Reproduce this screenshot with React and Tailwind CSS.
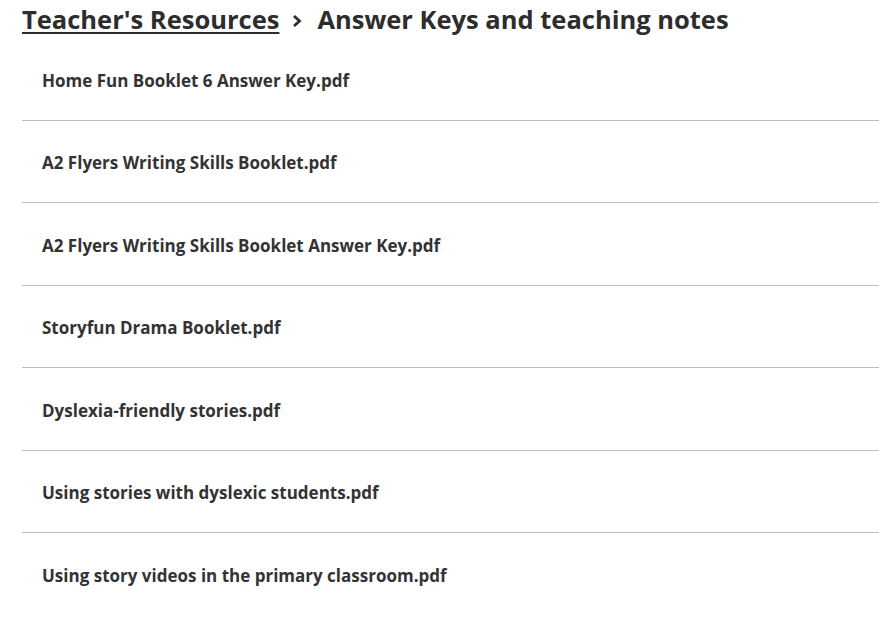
const files = [
  "Home Fun Booklet 6 Answer Key.pdf",
  "A2 Flyers Writing Skills Booklet.pdf",
  "A2 Flyers Writing Skills Booklet Answer Key.pdf",
  "Storyfun Drama Booklet.pdf",
  "Dyslexia-friendly stories.pdf",
  "Using stories with dyslexic students.pdf",
  "Using story videos in the primary classroom.pdf",
];

export default function App() {
  return (
    <div className="min-h-screen bg-white pl-[22px] font-['Open_Sans',sans-serif] text-[#2d2d2d]">
      <h1 className="flex items-center h-[38px] text-[25.5px] font-bold">
        <a href="#" className="underline underline-offset-[3px] decoration-[2px]">Teacher's Resources</a>
        <svg width="10" height="14" viewBox="0 0 10 14" className="ml-[13px] mr-[15px] mt-[3px]">
          <path d="M2 2 L7.5 7 L2 12" fill="none" stroke="#2d2d2d" strokeWidth="2.8" />
        </svg>
        <span>Answer Keys and teaching notes</span>
      </h1>
      <ul>
        {files.map((f, i) => (
          <li
            key={f}
            className={
              "flex items-center h-[82.5px] pl-[20px] pt-[3px] text-[17px] font-bold text-[#333] " +
              (i < files.length - 1 ? "border-b border-[#bdbdbd]" : "")
            }
          >
            <a href="#">{f}</a>
          </li>
        ))}
      </ul>
    </div>
  );
}
